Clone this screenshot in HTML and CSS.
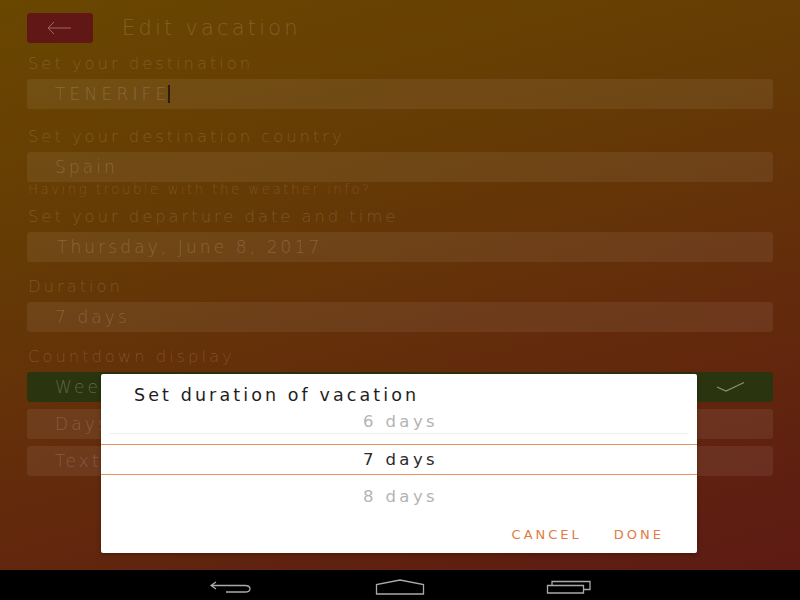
FILE: index.html
```html
<!DOCTYPE html>
<html>
<head>
<meta charset="utf-8">
<link rel="stylesheet" href="styles.css">
</head>
<body>
<div class="phone">
  <div class="screen">
    <div class="header">
      <div class="back-btn">
        <svg width="26" height="14" viewBox="0 0 26 14"><path d="M25 7H2M8 1L2 7l6 6" fill="none" stroke="#9a6b5c" stroke-width="1"/></svg>
      </div>
      <div class="title">Edit vacation</div>
    </div>

    <div class="label l1">Set your destination</div>
    <div class="input caps"><span>TENERIFE</span><span class="caret"></span></div>

    <div class="label l2">Set your destination country</div>
    <div class="input">Spain</div>
    <div class="hint">Having trouble with the weather info?</div>

    <div class="label l3">Set your departure date and time</div>
    <div class="input date">Thursday, June 8, 2017</div>

    <div class="label l4">Duration</div>
    <div class="input">7 days</div>

    <div class="label l5">Countdown display</div>
    <div class="options">
      <div class="option selected"><span>Weeks</span>
        <svg class="check" width="30" height="12" viewBox="0 0 30 12"><path d="M1 6l9 4L28 1.5" fill="none" stroke="#8c8f78" stroke-width="1.2"/></svg>
      </div>
      <div class="option"><span>Days</span></div>
      <div class="option"><span>Text</span></div>
    </div>

    <div class="dialog">
      <div class="dialog-title">Set duration of vacation</div>
      <div class="picker">
        <div class="pick dim first">6 days</div>
        <div class="pick current">7 days</div>
        <div class="pick dim">8 days</div>
      </div>
      <div class="actions">
        <span class="act">CANCEL</span>
        <span class="act">DONE</span>
      </div>
    </div>
  </div>
  <div class="navbar">
    <svg width="46" height="14" viewBox="0 0 46 14"><path d="M8 2L3 5.5 8 9M3 5.5h34c4 0 5 2 5 3.5S41 12 37 12H18" fill="none" stroke="#aaa" stroke-width="1.3"/></svg>
    <svg width="50" height="16" viewBox="0 0 50 16"><path d="M1.5 15V5.5L25 1l23.5 4.5V15z" fill="none" stroke="#aaa" stroke-width="1.3"/></svg>
    <svg width="46" height="14" viewBox="0 0 46 14"><path d="M1.5 5.5h36v7.5h-36z M6 5.5V1.5h38v8h-6.5" fill="none" stroke="#aaa" stroke-width="1.3"/></svg>
  </div>
</div>
</body>
</html>
```

FILE: styles.css
```css
html, body {
  margin: 0;
  padding: 0;
  width: 800px;
  height: 600px;
  overflow: hidden;
  background: #000;
}

.phone {
  width: 800px;
  height: 600px;
  display: flex;
  flex-direction: column;
}

.screen {
  position: relative;
  height: 570px;
  box-sizing: border-box;
  padding: 13px 27px 0 27px;
  background: linear-gradient(165deg, #694700 0%, #653a05 35%, #632a0c 65%, #5d1a13 100%);
  font-family: "DejaVu Sans", "Liberation Sans", sans-serif;
  font-weight: 200;
  display: flex;
  flex-direction: column;
}

.header {
  display: flex;
  align-items: center;
  height: 30px;
}

.back-btn {
  width: 66px;
  height: 30px;
  background: #621717;
  border-radius: 3px;
  display: flex;
  align-items: center;
  justify-content: center;
  padding-right: 2px;
  box-sizing: border-box;
}

.title {
  margin-left: 29px;
  font-size: 21px;
  letter-spacing: 3.2px;
  color: rgba(255, 255, 255, 0.17);
}

.label {
  font-size: 16.5px;
  line-height: 20px;
  letter-spacing: 2.9px;
  color: rgba(255, 255, 255, 0.16);
  margin-bottom: 5px;
  padding-left: 1px;
}

.l1 { margin-top: 11px; }
.l2 { margin-top: 18px; }
.l3 { margin-top: 11px; }
.l4 { margin-top: 15px; }
.l5 { margin-top: 15px; }

.input {
  height: 30px;
  border-radius: 3px;
  background: rgba(255, 255, 255, 0.065);
  padding-left: 28px;
  display: flex;
  align-items: center;
  font-size: 17px;
  letter-spacing: 3.1px;
  color: rgba(255, 255, 255, 0.18);
}

.input.caps { letter-spacing: 4.2px; }
.input.date { padding-left: 30px; }

.caret {
  display: inline-block;
  width: 2px;
  height: 18px;
  background: #2a1e10;
  margin-left: -3px;
}

.hint {
  font-size: 13.5px;
  line-height: 14px;
  letter-spacing: 2.4px;
  color: rgba(255, 255, 255, 0.14);
  padding-left: 1px;
}

.options {
  display: flex;
  flex-direction: column;
  gap: 7px;
}

.option {
  height: 30px;
  border-radius: 3px;
  background: rgba(255, 255, 255, 0.07);
  padding: 0 27px 0 28px;
  display: flex;
  align-items: center;
  justify-content: space-between;
  font-size: 17px;
  letter-spacing: 3.1px;
  color: rgba(255, 255, 255, 0.18);
}

.option.selected {
  background: #2a340e;
  color: rgba(255, 255, 255, 0.25);
}

.dialog {
  position: absolute;
  left: 101px;
  top: 374px;
  width: 596px;
  height: 179px;
  background: #fff;
  border-radius: 2px;
  box-shadow: 0 1px 4px rgba(0, 0, 0, 0.3);
  font-family: "DejaVu Sans", "Liberation Sans", sans-serif;
  font-weight: 400;
  display: flex;
  flex-direction: column;
}

.dialog-title {
  padding: 10px 0 0 33px;
  height: 22px;
  font-size: 17.5px;
  line-height: 23px;
  letter-spacing: 3.1px;
  color: #1e1e1e;
}

.picker {
  display: flex;
  flex-direction: column;
}

.pick {
  text-align: center;
  font-size: 16.5px;
  letter-spacing: 3.4px;
  padding-left: 3px;
}

.pick.first {
  height: 27px;
  line-height: 31px;
  margin: 0 9px;
  border-bottom: 1px solid #eeeeee;
}

.pick.dim { color: #b4b4b4; }

.pick.current {
  margin-top: 10px;
  height: 29px;
  line-height: 29px;
  border-top: 1.5px solid #e8925d;
  border-bottom: 1.5px solid #e8925d;
  color: #2a2a2a;
}

.pick.dim:last-child {
  height: 30px;
  line-height: 43px;
}

.actions {
  display: flex;
  justify-content: flex-end;
  gap: 32px;
  padding-right: 33px;
  margin-top: 22px;
}

.act {
  font-size: 13px;
  letter-spacing: 3px;
  color: #e07b43;
  font-weight: 400;
}

.navbar {
  height: 30px;
  background: #000;
  display: flex;
  align-items: center;
  justify-content: center;
  gap: 121px;
  padding-top: 3px;
  box-sizing: border-box;
}
```
